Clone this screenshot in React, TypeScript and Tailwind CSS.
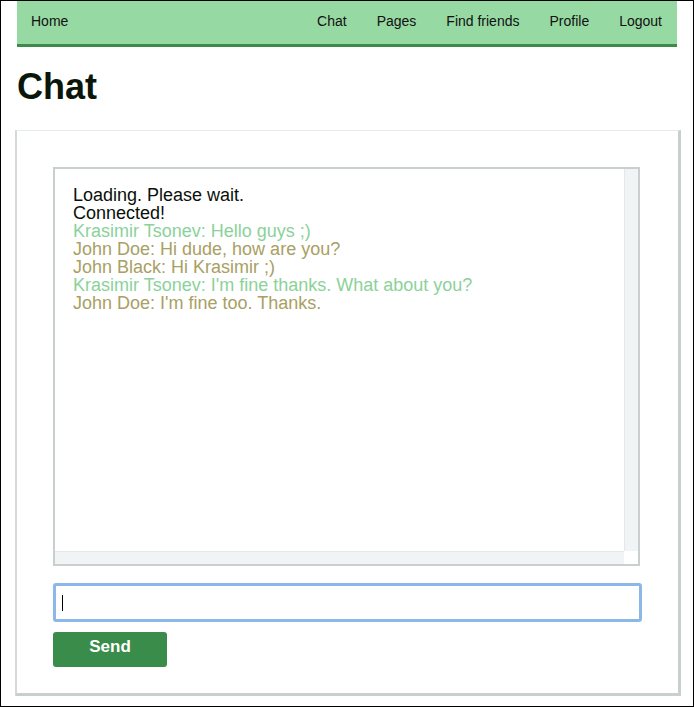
const links = ['Chat', 'Pages', 'Find friends', 'Profile', 'Logout'];

const messages = [
  { text: 'Loading. Please wait.', color: 'text-[#0a0f0a]' },
  { text: 'Connected!', color: 'text-[#0a0f0a]' },
  { text: 'Krasimir Tsonev: Hello guys ;)', color: 'text-[#8bd29a]' },
  { text: 'John Doe: Hi dude, how are you?', color: 'text-[#a9a064]' },
  { text: 'John Black: Hi Krasimir ;)', color: 'text-[#a9a064]' },
  { text: "Krasimir Tsonev: I'm fine thanks. What about you?", color: 'text-[#8bd29a]' },
  { text: "John Doe: I'm fine too. Thanks.", color: 'text-[#a9a064]' },
];

export default function App() {
  return (
    <div className="w-[694px] h-[707px] border border-black bg-white overflow-hidden font-['Liberation_Sans',Arial,sans-serif]">
      {/* Top navigation */}
      <nav className="ml-[16px] w-[660px] h-[46px] flex items-center bg-[#97d9a3] border-b-[3px] border-[#3c8b4a] text-[14px] text-[#111]">
        <a className="pl-[14px] pr-[15px] pb-[2px]">Home</a>
        <div className="ml-auto flex pb-[2px]">
          {links.map((l) => (
            <a key={l} className="px-[15px] whitespace-nowrap">
              {l}
            </a>
          ))}
        </div>
      </nav>

      <h1 className="ml-[16px] mt-[22px] text-[36px] leading-[36px] font-bold text-[#0b160b]">Chat</h1>

      {/* Chat panel */}
      <section className="ml-[14px] mt-[25px] w-[666px] border-t border-l-2 border-r-[3px] border-b-[3px] border-t-[#e6eaea] border-l-[#d3d8d8] border-r-[#c9cece] border-b-[#c9cece] pt-[36px] pl-[36px] pb-[26px]">
        <div className="w-[587px] h-[399px] border-2 border-[#c9cecf] grid grid-cols-[1fr_14px] grid-rows-[1fr_13px]">
          <div className="pl-[18px] pt-[17px] text-[18px] leading-[18px]">
            {messages.map((m, i) => (
              <p key={i} className={`whitespace-nowrap ${m.color}`}>
                {m.text}
              </p>
            ))}
          </div>
          <div className="bg-[#f1f4f4] border-l border-[#e4e8e8]" />
          <div className="bg-[#f1f4f4] border-t border-[#e4e8e8]" />
          <div className="bg-white" />
        </div>

        <div className="mt-[17px] w-[589px] h-[39px] border-[3px] border-[#8bb8e8] rounded-[3px] flex items-center pl-[6px]">
          <span className="w-px h-[16px] bg-black" />
        </div>

        <button className="mt-[10px] w-[114px] h-[35px] rounded-[3px] bg-[#3a8c4a] text-white text-[17px] font-bold flex items-center justify-center pb-[6px]">
          Send
        </button>
      </section>
    </div>
  );
}
